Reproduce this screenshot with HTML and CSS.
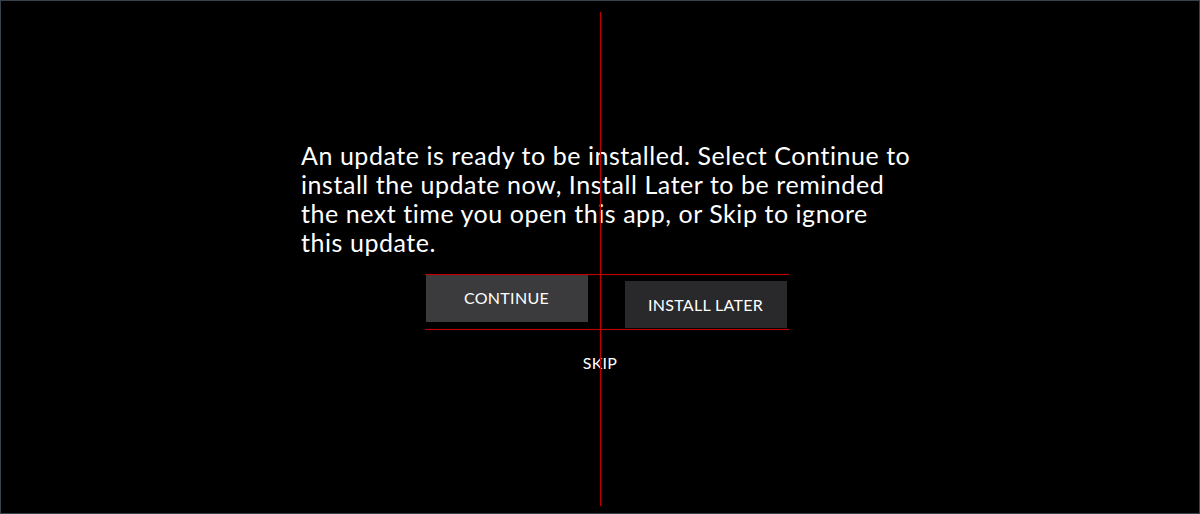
FILE: index.html
```html
<!DOCTYPE html>
<html>
<head>
<meta charset="utf-8">
<link rel="stylesheet" href="styles.css">
</head>
<body>
<div class="frame">
  <div class="dialog">
    <p class="message">An update is ready to be installed. Select Continue to install the update now, Install Later to be reminded the next time you open this app, or Skip to ignore this update.</p>
    <div class="actions">
      <button class="btn btn-primary">CONTINUE</button>
      <button class="btn btn-secondary">INSTALL LATER</button>
      <span class="guide guide-top"></span>
      <span class="guide guide-bottom"></span>
    </div>
    <button class="skip">SKIP</button>
  </div>
  <span class="guide guide-vertical"></span>
</div>
</body>
</html>
```
FILE: styles.css
```css
html, body {
  margin: 0;
  padding: 0;
  background: #000;
}
.frame {
  position: relative;
  width: 1200px;
  height: 514px;
  box-sizing: border-box;
  border: 1px solid #38414d;
  background: #000;
  font-family: Lato, "Open Sans", sans-serif;
  color: #fff;
}
.dialog {
  display: flex;
  flex-direction: column;
  align-items: center;
  padding-top: 140px;
}
.message {
  margin: 0 0 0 14px;
  width: 612px;
  height: 116px;
  font-size: 25px;
  line-height: 29px;
  letter-spacing: 0.55px;
  font-weight: 400;
}
.actions {
  position: relative;
  display: flex;
  align-items: flex-start;
  gap: 37px;
  margin-top: 17px;
  margin-left: 12px;
  height: 55px;
}
.btn {
  width: 162px;
  height: 47px;
  border: none;
  color: #fff;
  font-family: Lato, "Open Sans", sans-serif;
  font-size: 16px;
  letter-spacing: 0.3px;
  padding: 0;
}
.btn-primary {
  background: #3b3b3d;
  margin-top: 1px;
  padding-bottom: 2px;
}
.btn-secondary {
  background: #29292b;
  margin-top: 7px;
}
.skip {
  margin-top: 24px;
  background: none;
  border: none;
  color: #fff;
  font-family: Lato, "Open Sans", sans-serif;
  font-size: 16px;
  letter-spacing: 0.3px;
  padding: 0;
}
.guide {
  position: absolute;
  background: #c00000;
  box-shadow: 0 0 1px rgba(190, 0, 0, 0.7);
}
.guide-top {
  left: -1px;
  right: -2px;
  top: 0;
  height: 1px;
}
.guide-bottom {
  left: -1px;
  right: -2px;
  top: 55px;
  height: 1px;
}
.guide-vertical {
  left: 599px;
  top: 11px;
  width: 1px;
  height: 494px;
}
```
